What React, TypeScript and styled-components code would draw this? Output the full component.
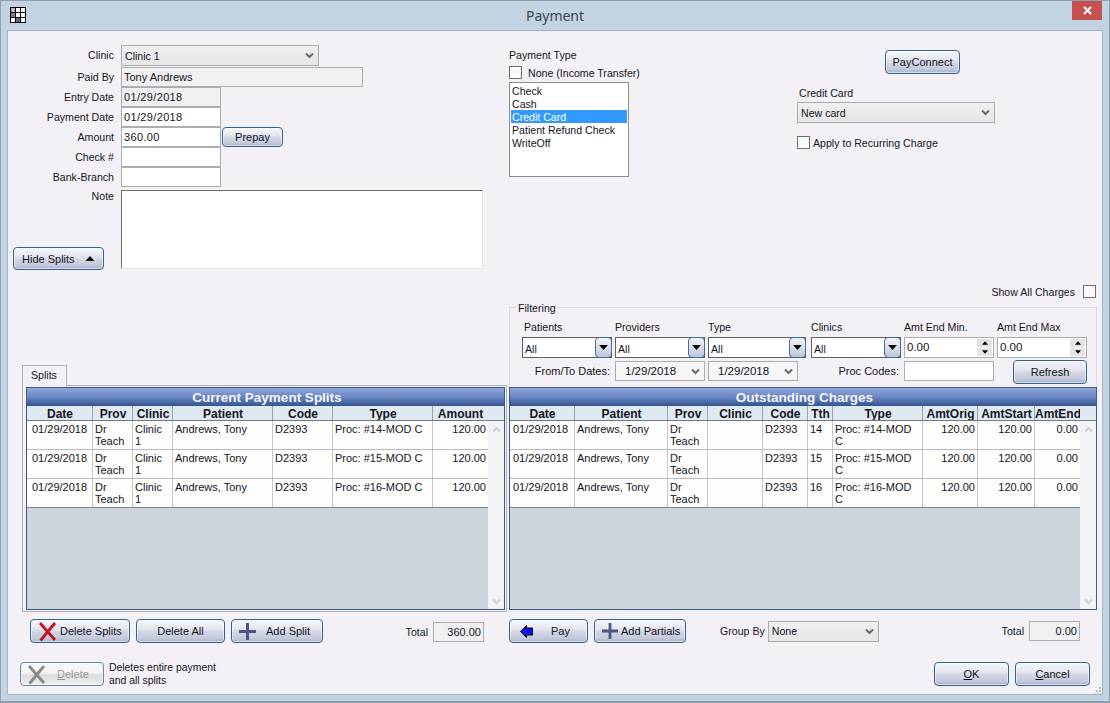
import React from 'react';
import styled, { createGlobalStyle } from 'styled-components';

const GlobalStyle = createGlobalStyle`
  html, body {
    margin: 0;
    padding: 0;
    overflow: hidden;
  }
  body {
    font-family: 'Liberation Sans', Arial, sans-serif;
    font-size: 10.6px;
    color: #14141c;
  }
  * {
    box-sizing: border-box;
  }
`;

const Window = styled.div`
  width: 1110px;
  height: 703px;
  display: flex;
  flex-direction: column;
  background: #c2d4e2;
  border: 1px solid #8f9fac;
  border-bottom-width: 2px;
`;

const TitleBar = styled.div`
  height: 29px;
  flex: none;
  display: grid;
  grid-template-columns: 1fr auto 1fr;
  align-items: start;
`;

const TitleIcon = styled.svg`
  display: block;
  margin: 6px 0 0 9px;
`;

const TitleText = styled.div`
  font-family: 'Noto Sans', sans-serif;
  font-size: 14px;
  line-height: 30px;
  color: #3b4650;
`;

const CloseButton = styled.div`
  justify-self: end;
  width: 30px;
  height: 19px;
  margin-right: 7px;
  background: #c75050;
  display: flex;
  align-items: center;
  justify-content: center;
`;

const Client = styled.div`
  position: relative;
  flex: 1;
  margin: 0 6px 6px;
  padding: 0 5px;
  background: #f3f1f5;
  border: 1px solid #a3b3c6;
  display: grid;
  grid-template-columns: 494px 588px;
  column-gap: 2px;
  align-content: start;
`;

const Grip = styled.svg`
  position: absolute;
  right: 0;
  bottom: 0;
`;

const Column = styled.div`
  display: flex;
  flex-direction: column;
  min-width: 0;
`;

/* left form */
const Form = styled.div`
  height: 239px;
  padding-top: 14px;
  display: grid;
  grid-template-columns: 108px 1fr;
  grid-template-rows: 22px repeat(6, 20px) auto;
  align-content: start;
`;

const FormLabel = styled.div`
  padding-right: 7px;
  text-align: right;
  line-height: 21px;
  white-space: nowrap;
`;

const FormRow = styled.div`
  display: flex;
  align-items: flex-start;
  gap: 1px;
`;

const Field = styled.div<{ $w: number; $h?: number; $disabled?: boolean; $right?: boolean }>`
  width: ${p => p.$w}px;
  height: ${p => p.$h || 20}px;
  flex: none;
  border: 1px solid #abadb3;
  background: ${p => (p.$disabled ? '#f1f0f3' : '#ffffff')};
  padding: 0 ${p => (p.$right ? '2px' : '0')} 0 2px;
  font-size: 11px;
  line-height: 18px;
  white-space: nowrap;
  text-align: ${p => (p.$right ? 'right' : 'left')};
`;

const Digits = styled.span`
  letter-spacing: 0.35px;
`;

const NoteRow = styled.div`
  grid-column: 1 / -1;
  height: 80px;
  margin-top: 3px;
  display: flex;
`;

const NoteLeft = styled.div`
  width: 108px;
  flex: none;
  display: flex;
  flex-direction: column;
  align-items: flex-start;
`;

const NoteLabel = styled.div`
  align-self: stretch;
  padding-right: 7px;
  text-align: right;
  line-height: 13px;
`;

const NoteBox = styled.div`
  width: 362px;
  height: 79px;
  background: #ffffff;
  border: 1px solid #e4e4e6;
  border-top-color: #6e6e6e;
  border-left-color: #6e6e6e;
`;

/* buttons */
const Button = styled.div<{ $w: number; $h?: number; $pad?: number; $gap?: number; $off?: boolean }>`
  width: ${p => p.$w}px;
  height: ${p => p.$h || 24}px;
  flex: none;
  display: flex;
  align-items: center;
  justify-content: ${p => (p.$pad !== undefined ? 'flex-start' : 'center')};
  gap: ${p => p.$gap || 0}px;
  padding-left: ${p => p.$pad || 0}px;
  border: 1px solid ${p => (p.$off ? '#5f88ad' : '#2f6595')};
  border-radius: 4px;
  font-size: 11px;
  color: ${p => (p.$off ? '#9c9c9c' : '#14141c')};
  background: ${p =>
    p.$off
      ? 'linear-gradient(#f8f8f8 0%, #f4f4f4 45%, #dcdcdc 55%, #efefef 100%)'
      : 'linear-gradient(#f6f7fb 0%, #e4e6ef 40%, #d1d5e2 55%, #c5cadb 82%, #a9b1c8 100%)'};
  box-shadow: inset 0 0 0 1px rgba(255, 255, 255, 0.5);
  white-space: nowrap;
`;

const FormButton = styled(Button)`
  margin-top: auto;
`;

/* payment type and credit card */
const TopRight = styled.div`
  height: 254px;
  display: grid;
  grid-template-columns: 288px 1fr;
`;

const PaymentCol = styled.div`
  padding-top: 17px;
`;

const PlainLabel = styled.div`
  line-height: 14px;
  white-space: nowrap;
`;

const CheckRow = styled.div<{ $top: number; $gap: number }>`
  display: flex;
  align-items: center;
  gap: ${p => p.$gap}px;
  margin-top: ${p => p.$top}px;
  height: 13px;
  white-space: nowrap;
`;

const CheckBox = styled.span`
  width: 13px;
  height: 13px;
  flex: none;
  border: 1px solid #707070;
  background: #fafafa;
`;

const ListBox = styled.div`
  width: 120px;
  height: 95px;
  margin-top: 3px;
  padding: 1px;
  border: 1px solid #8c8c8c;
  background: #ffffff;
`;

const ListItem = styled.div<{ $selected?: boolean }>`
  height: 13px;
  padding-left: 1px;
  line-height: 14px;
  background: ${p => (p.$selected ? '#3399ff' : 'transparent')};
  color: ${p => (p.$selected ? '#ffffff' : 'inherit')};
  white-space: nowrap;
`;

const CreditCol = styled.div`
  padding-top: 19px;
  display: flex;
  flex-direction: column;
  align-items: flex-start;
`;

const PayConnectWrap = styled.div`
  margin-left: 88px;
`;

const CreditLabel = styled(PlainLabel)`
  margin: 12px 0 2px 2px;
`;

const Select = styled.div<{ $w: number }>`
  width: ${p => p.$w}px;
  height: 21px;
  flex: none;
  display: flex;
  align-items: center;
  justify-content: space-between;
  padding: 0 4px 0 3px;
  border: 1px solid #acacac;
  background: linear-gradient(#f0f0f0, #e5e5e5);
  white-space: nowrap;
`;

const ShowAllRow = styled.div`
  height: 13px;
  padding-right: 1px;
  display: flex;
  justify-content: flex-end;
  align-items: center;
  gap: 8px;
`;

/* filtering */
const FilterGroup = styled.div`
  position: relative;
  height: 80px;
  margin-top: 9px;
  padding: 12px 0 0 12px;
  border: 1px solid #d9d9dd;
  border-bottom: none;
`;

const FilterTitle = styled.div`
  position: absolute;
  top: -6px;
  left: 6px;
  padding: 0 2px;
  background: #f3f1f5;
  line-height: 13px;
`;

const FilterGrid = styled.div`
  display: grid;
  grid-template-columns: 93px 93px 103px 93px 93px 90px;
  grid-template-rows: 14px 21px 20px;
  row-gap: 3px;
  align-items: start;
`;

const FilterLabel = styled.div<{ $indent?: number }>`
  padding-left: ${p => p.$indent || 0}px;
  line-height: 14px;
  white-space: nowrap;
`;

const RowLabel = styled.div`
  padding-right: 5px;
  text-align: right;
  font-size: 11px;
  line-height: 20px;
  white-space: nowrap;
`;

const Combo = styled.div<{ $w: number }>`
  position: relative;
  width: ${p => p.$w}px;
  height: 21px;
  padding-left: 2px;
  border: 1px solid #5f5f5f;
  background: #ffffff;
  line-height: 22px;
`;

const ComboArrow = styled.div`
  position: absolute;
  top: -1px;
  right: -1px;
  width: 17px;
  height: 21px;
  display: flex;
  align-items: center;
  justify-content: center;
  border: 1px solid #3d6e9e;
  border-radius: 4px;
  background: linear-gradient(#f2f3f8, #d6dbe7 55%, #bcc4d8);
`;

const Spin = styled.div`
  position: relative;
  width: 90px;
  height: 21px;
  padding-left: 2px;
  border: 1px solid #abadb3;
  background: #ffffff;
  line-height: 19px;
  font-size: 11.5px;
`;

const SpinButtons = styled.div`
  position: absolute;
  top: 1px;
  right: 1px;
  width: 15px;
  height: 17px;
  display: flex;
  flex-direction: column;
  gap: 1px;
`;

const SpinPart = styled.div`
  flex: 1;
  display: flex;
  align-items: center;
  justify-content: center;
  background: #e4e4e6;
`;

const RefreshWrap = styled.div`
  margin: -1px 0 0 16px;
`;

const DateCombo = styled(Select)`
  background: #f6f5f7;
  height: 20px;
  padding-left: 9px;
  font-size: 11.5px;
`;

/* tab page */
const Tab = styled.div`
  position: relative;
  z-index: 1;
  width: 45px;
  height: 21px;
  margin: 95px 0 -1px 9px;
  padding: 2px 0 0 8px;
  border: 1px solid #b0b0b6;
  border-bottom: none;
  background: #f3f1f5;
  line-height: 14px;
`;

const TabPanel = styled.div`
  width: 485px;
  height: 227px;
  margin-left: 9px;
  padding: 1px 1px 0 3px;
  border: 1px solid #b0b0b6;
`;

/* data grids */
const GridFrame = styled.div`
  height: 223px;
  display: flex;
  flex-direction: column;
  border: 1px solid #3c5a86;
  background: #cdd5dd;
`;

const GridTitle = styled.div`
  height: 18px;
  flex: none;
  padding-left: 3px;
  text-align: center;
  line-height: 20px;
  font-size: 13.5px;
  font-weight: bold;
  color: #f4f6fb;
  background: linear-gradient(#8ea6dc, #6a86c2 50%, #34548f);
`;

const GridHead = styled.div<{ $cols: string }>`
  height: 15px;
  flex: none;
  display: grid;
  grid-template-columns: ${p => p.$cols};
  border-bottom: 1px solid #717a82;
  background: #dfe9f2;
`;

const HeadCell = styled.div`
  text-align: center;
  font-size: 12px;
  font-weight: bold;
  line-height: 16px;
  white-space: nowrap;
  overflow: hidden;
  box-shadow: inset -1px 0 0 #9aa3ac;
  &:last-child {
    box-shadow: none;
  }
`;

const GridBody = styled.div`
  flex: 1;
  display: flex;
  min-height: 0;
`;

const GridRows = styled.div`
  flex: 1;
  min-width: 0;
`;

const GridRow = styled.div<{ $cols: string; $last?: boolean }>`
  height: 29px;
  display: grid;
  grid-template-columns: ${p => p.$cols};
  background: #fdfefc;
  border-bottom: 1px solid ${p => (p.$last ? '#7b858e' : '#b4bbc1')};
`;

const Cell = styled.div<{ $align?: string; $pad?: number }>`
  padding: 2px 2px 0 ${p => p.$pad || 2}px;
  font-size: 11px;
  line-height: 12px;
  text-align: ${p => p.$align || 'left'};
  border-right: 1px solid #c3c8cd;
  overflow: hidden;
  &:last-child {
    border-right: none;
  }
`;

const ScrollBar = styled.div`
  width: 16px;
  flex: none;
  display: flex;
  flex-direction: column;
  justify-content: space-between;
  align-items: center;
  padding: 5px 0 4px;
  background: #f3f3f6;
`;

/* footer */
const ActionRow = styled.div<{ $indent?: number; $top: number }>`
  height: 24px;
  margin-top: ${p => p.$top}px;
  margin-left: ${p => p.$indent || 0}px;
  display: flex;
  align-items: center;
  gap: 6px;
`;

const GroupBy = styled.div`
  margin-left: 28px;
  display: flex;
  align-items: center;
  gap: 3px;
  white-space: nowrap;
`;

const Total = styled.div<{ $right: number; $drop?: number }>`
  margin-left: auto;
  margin-right: ${p => p.$right}px;
  padding-top: ${p => p.$drop || 0}px;
  display: flex;
  align-items: center;
  gap: 5px;
`;

const BottomRow = styled.div<{ $end?: boolean }>`
  height: 24px;
  margin-top: 19px;
  display: flex;
  align-items: center;
  gap: 6px;
  padding: ${p => (p.$end ? '0 7px 0 0' : '0 0 0 7px')};
  justify-content: ${p => (p.$end ? 'flex-end' : 'flex-start')};
`;

const DeleteNote = styled.div`
  margin-left: -1px;
  font-size: 10.4px;
  line-height: 13px;
`;

const Chevron = ({ up, color = '#6a6a6a' }: { up?: boolean; color?: string }) => (
  <svg width="9" height="7" viewBox="0 0 9 7">
    <path d={up ? 'M1 5.5 L4.5 2 L8 5.5' : 'M1 1.5 L4.5 5 L8 1.5'} fill="none" stroke={color} strokeWidth="2" />
  </svg>
);

const Tri = ({ up, w = 7, h = 4 }: { up?: boolean; w?: number; h?: number }) => (
  <svg width={w} height={h} viewBox="0 0 7 4">
    <path d={up ? 'M3.5 0 L7 4 L0 4 Z' : 'M0 0 L7 0 L3.5 4 Z'} fill="#000" />
  </svg>
);

const RedX = ({ color = '#c4112c' }: { color?: string }) => (
  <svg width="19" height="21" viewBox="0 0 19 21">
    <path d="M2 2 L17 19 M17 2 L2.5 19.5" fill="none" stroke={color} strokeWidth="2.8" />
  </svg>
);

const Plus = ({ size = 17 }: { size?: number }) => (
  <svg width={size} height={size} viewBox="0 0 17 17">
    <path d="M7 0 H10 V7 H17 V10 H10 V17 H7 V10 H0 V7 H7 Z" fill="#4d5384" />
    <path d="M6 1 V7" stroke="#fff" strokeWidth="1" opacity="0.7" />
  </svg>
);

const BlueArrow = () => (
  <svg width="13" height="13" viewBox="0 0 13 13">
    <path d="M6.5 0.5 V3 H12.5 V10 H6.5 V12.5 L0.5 6.5 Z" fill="#0f12e6" stroke="#000" strokeWidth="1" />
  </svg>
);

const SplitCols = '66px 40px 40px 100px 60px 100px 55px 16px';
const SplitRowCols = '66px 40px 40px 100px 60px 100px 55px';
const ChargeCols = '65px 93px 40px 55px 45px 25px 90px 55px 57px 45px 16px';
const ChargeRowCols = '65px 93px 40px 55px 45px 25px 90px 55px 57px 45px';

const splitHeads = ['Date', 'Prov', 'Clinic', 'Patient', 'Code', 'Type', 'Amount'];
const chargeHeads = ['Date', 'Patient', 'Prov', 'Clinic', 'Code', 'Tth', 'Type', 'AmtOrig', 'AmtStart', 'AmtEnd'];
const teeth = ['14', '15', '16'];

const Grid = ({ title, cols, rowCols, heads, children }: {
  title: string;
  cols: string;
  rowCols: string;
  heads: string[];
  children: (cols: string) => React.ReactNode;
}) => (
  <GridFrame>
    <GridTitle>{title}</GridTitle>
    <GridHead $cols={cols}>
      {heads.map((h, i) => <HeadCell key={i}>{h}</HeadCell>)}
    </GridHead>
    <GridBody>
      <GridRows>{children(rowCols)}</GridRows>
      <ScrollBar>
        <Chevron up color="#c9d1dc" />
        <Chevron color="#c9d1dc" />
      </ScrollBar>
    </GridBody>
  </GridFrame>
);

const App = () => (
  <>
    <GlobalStyle />
    <Window>
      <TitleBar>
        <TitleIcon width="16" height="16" viewBox="0 0 16 16">
          <rect width="16" height="16" fill="#000" />
          <rect x="1" y="1" width="4" height="4" fill="#b8b8c0" />
          <rect x="6" y="1" width="4" height="4" fill="#fff" />
          <rect x="11" y="1" width="4" height="4" fill="#fff" />
          <rect x="1" y="6" width="4" height="4" fill="#808088" />
          <rect x="6" y="6" width="4" height="4" fill="#fff" />
          <rect x="11" y="6" width="4" height="4" fill="#fff" />
          <rect x="1" y="11" width="4" height="4" fill="#fff" />
          <rect x="6" y="11" width="4" height="4" fill="#686870" />
          <rect x="11" y="11" width="4" height="4" fill="#fff" />
        </TitleIcon>
        <TitleText>Payment</TitleText>
        <CloseButton>
          <svg width="9" height="9" viewBox="0 0 9 9">
            <path d="M1 1 L8 8 M8 1 L1 8" stroke="#fff" strokeWidth="2" />
          </svg>
        </CloseButton>
      </TitleBar>
      <Client>
        <Column>
          <Form>
            <FormLabel>Clinic</FormLabel>
            <Select $w={198}>Clinic 1<Chevron /></Select>
            <FormLabel>Paid By</FormLabel>
            <Field $w={242} $disabled>Tony Andrews</Field>
            <FormLabel>Entry Date</FormLabel>
            <Field $w={100} $disabled><Digits>01/29/2018</Digits></Field>
            <FormLabel>Payment Date</FormLabel>
            <Field $w={100}><Digits>01/29/2018</Digits></Field>
            <FormLabel>Amount</FormLabel>
            <FormRow>
              <Field $w={100}><Digits>360.00</Digits></Field>
              <Button $w={61} $h={20}>Prepay</Button>
            </FormRow>
            <FormLabel>Check #</FormLabel>
            <Field $w={100} />
            <FormLabel>Bank-Branch</FormLabel>
            <Field $w={100} />
            <NoteRow>
              <NoteLeft>
                <NoteLabel>Note</NoteLabel>
                <FormButton $w={91} $h={23} $pad={8} $gap={10}>
                  Hide Splits
                  <Tri up w={10} h={5} />
                </FormButton>
              </NoteLeft>
              <NoteBox />
            </NoteRow>
          </Form>
          <Tab>Splits</Tab>
          <TabPanel>
            <Grid title="Current Payment Splits" cols={SplitCols} rowCols={SplitRowCols} heads={splitHeads}>
              {cols => teeth.map((t, i) => (
                <GridRow key={t} $cols={cols} $last={i === 2}>
                  <Cell $align="center">01/29/2018</Cell>
                  <Cell>Dr Teach</Cell>
                  <Cell>Clinic 1</Cell>
                  <Cell>Andrews, Tony</Cell>
                  <Cell>D2393</Cell>
                  <Cell>{`Proc: #${t}-MOD C`}</Cell>
                  <Cell $align="right">120.00</Cell>
                </GridRow>
              ))}
            </Grid>
          </TabPanel>
          <ActionRow $indent={17} $top={7}>
            <Button $w={100} $pad={7} $gap={3}><RedX />Delete Splits</Button>
            <Button $w={89}>Delete All</Button>
            <Button $w={92} $pad={7} $gap={10}><Plus />Add Split</Button>
            <Total $right={23} $drop={1}>
              Total
              <Field $w={51} $right $disabled>360.00</Field>
            </Total>
          </ActionRow>
          <BottomRow>
            <Button $w={84} $pad={6} $gap={11} $off>
              <RedX color="#8a8a8a" />
              <span><u>D</u>elete</span>
            </Button>
            <DeleteNote>Deletes entire payment<br />and all splits</DeleteNote>
          </BottomRow>
        </Column>
        <Column>
          <TopRight>
            <PaymentCol>
              <PlainLabel>Payment Type</PlainLabel>
              <CheckRow $top={4} $gap={6}>
                <CheckBox />
                None (Income Transfer)
              </CheckRow>
              <ListBox>
                <ListItem>Check</ListItem>
                <ListItem>Cash</ListItem>
                <ListItem $selected>Credit Card</ListItem>
                <ListItem>Patient Refund Check</ListItem>
                <ListItem>WriteOff</ListItem>
              </ListBox>
            </PaymentCol>
            <CreditCol>
              <PayConnectWrap>
                <Button $w={75}>PayConnect</Button>
              </PayConnectWrap>
              <CreditLabel>Credit Card</CreditLabel>
              <Select $w={198}>New card<Chevron /></Select>
              <CheckRow $top={13} $gap={3}>
                <CheckBox />
                Apply to Recurring Charge
              </CheckRow>
            </CreditCol>
          </TopRight>
          <ShowAllRow>
            Show All Charges
            <CheckBox />
          </ShowAllRow>
          <FilterGroup>
            <FilterTitle>Filtering</FilterTitle>
            <FilterGrid>
              <FilterLabel $indent={2}>Patients</FilterLabel>
              <FilterLabel>Providers</FilterLabel>
              <FilterLabel>Type</FilterLabel>
              <FilterLabel>Clinics</FilterLabel>
              <FilterLabel>Amt End Min.</FilterLabel>
              <FilterLabel>Amt End Max</FilterLabel>
              <Combo $w={90}>All<ComboArrow><Tri w={9} h={5} /></ComboArrow></Combo>
              <Combo $w={90}>All<ComboArrow><Tri w={9} h={5} /></ComboArrow></Combo>
              <Combo $w={98}>All<ComboArrow><Tri w={9} h={5} /></ComboArrow></Combo>
              <Combo $w={90}>All<ComboArrow><Tri w={9} h={5} /></ComboArrow></Combo>
              <Spin>
                0.00
                <SpinButtons>
                  <SpinPart><Tri up w={6} h={4} /></SpinPart>
                  <SpinPart><Tri w={6} h={4} /></SpinPart>
                </SpinButtons>
              </Spin>
              <Spin>
                0.00
                <SpinButtons>
                  <SpinPart><Tri up w={6} h={4} /></SpinPart>
                  <SpinPart><Tri w={6} h={4} /></SpinPart>
                </SpinButtons>
              </Spin>
              <RowLabel>From/To Dates:</RowLabel>
              <DateCombo $w={90}>1/29/2018<Chevron /></DateCombo>
              <DateCombo $w={90}>1/29/2018<Chevron /></DateCombo>
              <RowLabel>Proc Codes:</RowLabel>
              <Field $w={90} />
              <RefreshWrap>
                <Button $w={74}>Refresh</Button>
              </RefreshWrap>
            </FilterGrid>
          </FilterGroup>
          <Grid title="Outstanding Charges" cols={ChargeCols} rowCols={ChargeRowCols} heads={chargeHeads}>
            {cols => teeth.map((t, i) => (
              <GridRow key={t} $cols={cols} $last={i === 2}>
                <Cell $pad={3}>01/29/2018</Cell>
                <Cell>Andrews, Tony</Cell>
                <Cell>Dr Teach</Cell>
                <Cell />
                <Cell>D2393</Cell>
                <Cell>{t}</Cell>
                <Cell>{`Proc: #${t}-MOD C`}</Cell>
                <Cell $align="right">120.00</Cell>
                <Cell $align="right">120.00</Cell>
                <Cell $align="right">0.00</Cell>
              </GridRow>
            ))}
          </Grid>
          <ActionRow $top={9}>
            <Button $w={79} $pad={10} $gap={18}><BlueArrow />Pay</Button>
            <Button $w={92} $pad={7} $gap={3}><Plus size={16} />Add Partials</Button>
            <GroupBy>
              Group By
              <Select $w={111}>None<Chevron /></Select>
            </GroupBy>
            <Total $right={17}>
              Total
              <Field $w={51} $right $disabled>0.00</Field>
            </Total>
          </ActionRow>
          <BottomRow $end>
            <Button $w={75}><span><u>O</u>K</span></Button>
            <Button $w={75}><span><u>C</u>ancel</span></Button>
          </BottomRow>
        </Column>
        <Grip width="8" height="8" viewBox="0 0 8 8">
          <path d="M5 1h2v2H5z M2 4h2v2H2z M5 4h2v2H5z M0 7h1v1H0z M3 7h1v1H3z M6 7h1v1H6z" fill="#b4bcc4" />
        </Grip>
      </Client>
    </Window>
  </>
);

export default App;
